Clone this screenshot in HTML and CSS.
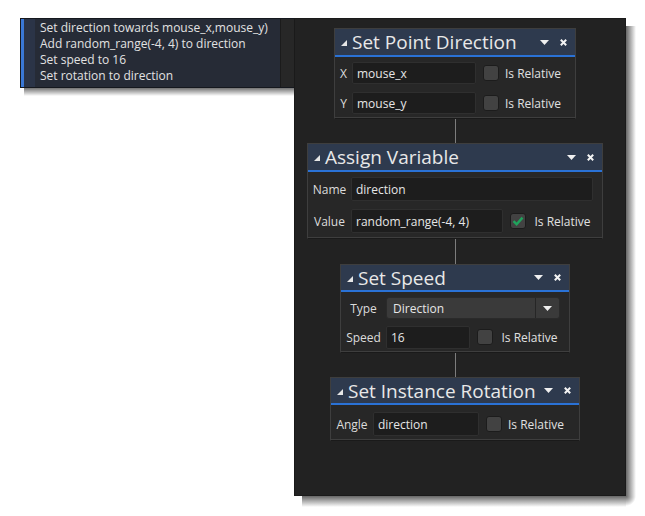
FILE: index.html
```html
<!DOCTYPE html>
<html>
<head>
<meta charset="utf-8">
<link rel="stylesheet" href="styles.css">
</head>
<body>
<div class="canvas">
  <div class="tooltip-wrap">
    <div class="tooltip">
      <div class="tip-stripe"><div class="tip-blue"></div></div>
      <div class="tip-text">
        <div>Set direction towards mouse_x,mouse_y)</div>
        <div>Add random_range(-4, 4) to direction</div>
        <div>Set speed to 16</div>
        <div>Set rotation to direction</div>
      </div>
      <div class="tip-gutter"></div>
    </div>
  </div>

  <div class="panel-wrap">
  <div class="panel">
    <div class="node node-point">
      <div class="node-head">
        <svg class="tri" width="6" height="6" viewBox="0 0 6 6"><polygon points="6,0 6,6 0,6"/></svg>
        <span class="node-title">Set Point Direction</span>
        <svg class="drop" width="9" height="5" viewBox="0 0 9 5"><polygon points="0,0 9,0 4.5,5"/></svg>
        <svg class="close" width="7" height="7" viewBox="0 0 7 7"><path d="M0.8 0.8 L6.2 6.2 M6.2 0.8 L0.8 6.2"/></svg>
      </div>
      <div class="node-body">
        <span class="lbl">X</span><span class="field">mouse_x</span><span class="check"></span><span class="rel">Is Relative</span>
        <span class="lbl">Y</span><span class="field">mouse_y</span><span class="check"></span><span class="rel">Is Relative</span>
      </div>
    </div>
    <div class="link link-a"></div>

    <div class="node node-assign">
      <div class="node-head">
        <svg class="tri" width="6" height="6" viewBox="0 0 6 6"><polygon points="6,0 6,6 0,6"/></svg>
        <span class="node-title">Assign Variable</span>
        <svg class="drop" width="9" height="5" viewBox="0 0 9 5"><polygon points="0,0 9,0 4.5,5"/></svg>
        <svg class="close" width="7" height="7" viewBox="0 0 7 7"><path d="M0.8 0.8 L6.2 6.2 M6.2 0.8 L0.8 6.2"/></svg>
      </div>
      <div class="node-body">
        <span class="lbl">Name</span><span class="field field-wide">direction</span>
        <span class="lbl">Value</span><span class="field">random_range(-4, 4)</span><span class="check checked"><svg width="12" height="10" viewBox="0 0 12 10"><path d="M1.5 5.2 L4.6 8.2 L10.5 1.6"/></svg></span><span class="rel">Is Relative</span>
      </div>
    </div>
    <div class="link link-b"></div>

    <div class="node node-speed">
      <div class="node-head">
        <svg class="tri" width="6" height="6" viewBox="0 0 6 6"><polygon points="6,0 6,6 0,6"/></svg>
        <span class="node-title">Set Speed</span>
        <svg class="drop" width="9" height="5" viewBox="0 0 9 5"><polygon points="0,0 9,0 4.5,5"/></svg>
        <svg class="close" width="7" height="7" viewBox="0 0 7 7"><path d="M0.8 0.8 L6.2 6.2 M6.2 0.8 L0.8 6.2"/></svg>
      </div>
      <div class="node-body">
        <span class="lbl">Type</span>
        <span class="select"><span class="select-val">Direction</span><span class="select-btn"><svg width="9" height="5" viewBox="0 0 9 5"><polygon points="0,0 9,0 4.5,5"/></svg></span></span>
        <span class="lbl">Speed</span><span class="field">16</span><span class="check"></span><span class="rel">Is Relative</span>
      </div>
    </div>
    <div class="link link-c"></div>

    <div class="node node-rot">
      <div class="node-head">
        <svg class="tri" width="6" height="6" viewBox="0 0 6 6"><polygon points="6,0 6,6 0,6"/></svg>
        <span class="node-title">Set Instance Rotation</span>
        <svg class="drop" width="9" height="5" viewBox="0 0 9 5"><polygon points="0,0 9,0 4.5,5"/></svg>
        <svg class="close" width="7" height="7" viewBox="0 0 7 7"><path d="M0.8 0.8 L6.2 6.2 M6.2 0.8 L0.8 6.2"/></svg>
      </div>
      <div class="node-body">
        <span class="lbl">Angle</span><span class="field">direction</span><span class="check"></span><span class="rel">Is Relative</span>
      </div>
    </div>
  </div>
  </div>
</div>
</body>
</html>
```

FILE: styles.css
```css
html, body {
  margin: 0;
  padding: 0;
  background: #ffffff;
}
body {
  font-family: "Open Sans", "DejaVu Sans", sans-serif;
  font-size: 12px;
  color: #e2e2e2;
}
.canvas {
  display: flex;
  align-items: flex-start;
  padding: 18px 0 0 20px;
}

/* tooltip */
.tooltip-wrap {
  padding-bottom: 8px;
  background-image: linear-gradient(to bottom, rgba(0, 0, 0, 0.55), rgba(0, 0, 0, 0));
  background-repeat: no-repeat;
  background-position: left 4px bottom 0;
  background-size: calc(100% - 4px) 8px;
}
.tooltip {
  display: flex;
  width: 274px;
  height: 70px;
  box-sizing: border-box;
  background: #262b36;
  border: 1px solid #15181e;
  border-right: none;
}
.tip-stripe {
  width: 14px;
  background: #2b3447;
  display: flex;
}
.tip-blue {
  width: 3px;
  background: #3a78d6;
}
.tip-text {
  flex: 1;
  padding: 1px 0 0 5px;
  line-height: 16px;
  white-space: nowrap;
}
.tip-gutter {
  width: 13px;
  background: #272727;
  border-left: 1px solid #1b1b1b;
}

/* main panel + its drop shadow */
.panel-wrap {
  padding: 0 10px 11px 0;
  background-image:
    linear-gradient(to right, rgba(0, 0, 0, 0.6), rgba(0, 0, 0, 0)),
    linear-gradient(to bottom, rgba(0, 0, 0, 0.6), rgba(0, 0, 0, 0)),
    radial-gradient(circle at top left, rgba(0, 0, 0, 0.6), rgba(0, 0, 0, 0) 10px);
  background-repeat: no-repeat;
  background-position: right 0 top 8px, left 8px bottom 0, right 0 bottom 0;
  background-size: 10px calc(100% - 19px), calc(100% - 18px) 11px, 10px 11px;
}
.panel {
  width: 332px;
  height: 478px;
  box-sizing: border-box;
  background: #222222;
  border: 1px solid #1a1a1a;
  padding: 9px 11px 0 1px;
  display: flex;
  flex-direction: column;
  align-items: center;
}

.link {
  width: 1px;
  background: #7d7d7d;
}
.link-a { height: 24px; }
.link-b { height: 25px; }
.link-c { height: 24px; }

/* nodes */
.node {
  box-sizing: border-box;
  border: 1px solid #3e3e3e;
  border-bottom-color: #1a1a1a;
  background: #272727;
}
.node-head {
  height: 26px;
  background: #2e3a4e;
  border-bottom: 2px solid #2a72d6;
  display: flex;
  align-items: center;
  padding: 0 8px 0 6px;
}
.node-speed .node-head,
.node-rot .node-head { height: 25px; }
.tri {
  fill: #e6e6e6;
  margin-right: 5px;
  margin-top: 2px;
  flex: none;
}
.node-title {
  flex: 1;
  font-size: 19px;
  line-height: 24px;
  color: #e8e8e8;
  white-space: nowrap;
}
.drop {
  fill: #f0f0f0;
  margin-right: 11px;
  flex: none;
}
.close {
  stroke: #f4f4f4;
  stroke-width: 2;
  fill: none;
  flex: none;
}

.node-body {
  display: grid;
  grid-template-columns: var(--lw) var(--fw) auto auto;
  justify-content: start;
  grid-auto-rows: var(--fh);
  row-gap: var(--gap);
  align-items: center;
  padding: var(--pt) 0 var(--pb) 0;
  border-bottom: 1px solid #3e3e3e;
}
.lbl {
  text-align: center;
  color: #dcdcdc;
}
.field {
  box-sizing: border-box;
  height: 100%;
  background: #1d1d1d;
  border: 1px solid #2f2f2f;
  border-radius: 2px;
  padding-left: 4px;
  display: flex;
  align-items: center;
  white-space: nowrap;
  color: #e6e6e6;
}
.field-wide {
  grid-column: 2 / 5;
  width: 242px;
}
.check {
  box-sizing: border-box;
  width: 16px;
  height: 16px;
  margin-left: 7px;
  background: #424242;
  border: 1px solid #1c1c1c;
  border-radius: 3px;
  display: flex;
  align-items: center;
  justify-content: center;
}
.check svg {
  stroke: #1fa35c;
  stroke-width: 2.4;
  fill: none;
}
.rel {
  margin-left: 6px;
  white-space: nowrap;
  color: #e0e0e0;
}

.select {
  grid-column: 2 / 5;
  width: 174px;
  height: 100%;
  box-sizing: border-box;
  display: flex;
  background: #3a3a3a;
  border: 1px solid #2a2a2a;
  border-radius: 3px;
}
.select-val {
  flex: 1;
  display: flex;
  align-items: center;
  padding-left: 6px;
  color: #e6e6e6;
}
.select-btn {
  width: 23px;
  border-left: 1px solid #262626;
  display: flex;
  align-items: center;
  justify-content: center;
  fill: #efefef;
}

.node-point  { width: 242px; --lw: 17px; --fw: 124px; --fh: 22px; --gap: 8px; --pt: 5px; --pb: 3px; }
.node-assign { width: 296px; --lw: 43px; --fw: 152px; --fh: 24px; --gap: 8px; --pt: 5px; --pb: 4px; }
.node-speed  { width: 230px; --lw: 45px; --fw: 84px;  --fh: 22px; --gap: 7px; --pt: 5px; --pb: 3px; }
.node-speed .field { height: 23px; }
.node-rot    { width: 250px; --lw: 42px; --fw: 106px; --fh: 24px; --gap: 0px; --pt: 7px; --pb: 3px; }
```
